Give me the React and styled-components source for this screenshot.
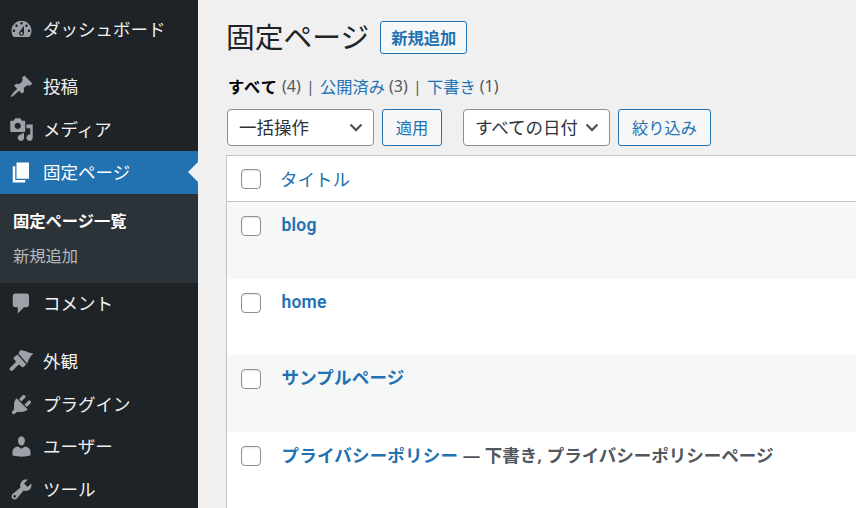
import React from 'react';
import styled, { createGlobalStyle } from 'styled-components';

const iconPaths = {
  dashboard: 'M3.76 16h12.48c1.1-1.37 1.76-3.11 1.76-5 0-4.42-3.58-8-8-8s-8 3.58-8 8c0 1.89.66 3.63 1.76 5zM10 4c.55 0 1 .45 1 1s-.45 1-1 1-1-.45-1-1 .45-1 1-1zM6 6c.55 0 1 .45 1 1s-.45 1-1 1-1-.45-1-1 .45-1 1-1zm8 0c.55 0 1 .45 1 1s-.45 1-1 1-1-.45-1-1 .45-1 1-1zm-5.37 5.55L12 7v6c0 1.1-.9 2-2 2s-2-.9-2-2c0-.57.24-1.08.63-1.45zM4 10c.55 0 1 .45 1 1s-.45 1-1 1-1-.45-1-1 .45-1 1-1zm12 0c.55 0 1 .45 1 1s-.45 1-1 1-1-.45-1-1 .45-1 1-1zm-5 3c0-.55-.45-1-1-1s-1 .45-1 1 .45 1 1 1 1-.45 1-1z',
  post: 'M10.44 3.02l1.82-1.82 6.36 6.35-1.83 1.82c-1.05-.68-2.48-.57-3.41.36l-.75.75c-.92.93-1.04 2.35-.35 3.41l-1.83 1.82-2.41-2.41-2.8 2.79c-.42.42-3.38 2.71-3.8 2.29s1.86-3.39 2.28-3.81l2.79-2.79L4.1 9.36l1.83-1.82c1.05.69 2.48.57 3.4-.36l.75-.75c.93-.92 1.05-2.35.36-3.41z',
  media: 'M13 11V4c0-.55-.45-1-1-1h-1.67L9 1H5L3.67 3H2c-.55 0-1 .45-1 1v7c0 .55.45 1 1 1h10c.55 0 1-.45 1-1zM7 4.5c1.38 0 2.5 1.12 2.5 2.5S8.38 9.5 7 9.5 4.5 8.38 4.5 7 5.62 4.5 7 4.5zM14 6h5v10.5c0 1.38-1.12 2.5-2.5 2.5S14 17.88 14 16.5s1.12-2.5 2.5-2.5c.17 0 .34.02.5.05V9h-3V6zm-4 8.05V13h2v3.5c0 1.38-1.12 2.5-2.5 2.5S7 17.88 7 16.5 8.12 14 9.5 14c.17 0 .34.02.5.05z',
  page: 'M6 15V2h10v13H6zm-1 1h8v2H3V5h2v11z',
  comments: 'M5 2h9c1.1 0 2 .9 2 2v7c0 1.1-.9 2-2 2h-2l-5 5v-5H5c-1.1 0-2-.9-2-2V4c0-1.1.9-2 2-2z',
  appearance: 'M7.5 3.6L9 1c3-.2 6 2 10.6 2.6-2.6 1.9-4.1 4.9-5 8.2zM6.8 4.4l7.1 8-2.1 1.8c-.6.5-1.3.5-1.8 0L8.8 13c-.5-.5-1.1-.5-1.6 0l-3.8 3.8c-.8.8-1.9.8-2.5.2s-.5-1.7.3-2.5L5 10.9c.5-.5.5-1.2 0-1.7l-1-1c-.5-.5-.5-1.1 0-1.6z',
  plugins: 'M13.11 4.36L9.87 7.6 8 5.73l3.24-3.24c.35-.34 1.05-.2 1.56.32.52.51.66 1.21.31 1.55zm-8 1.77l.91-1.12 9.01 9.01-1.19.84c-.71.71-2.63 1.16-3.82 1.16H6.14L4.9 17.26c-.59.59-1.54.59-2.12 0-.59-.58-.59-1.53 0-2.12l1.24-1.24v-3.88c0-1.13.4-3.19 1.09-3.89zm7.26 3.97l3.24-3.24c.34-.35 1.04-.21 1.55.31.52.51.66 1.21.31 1.55l-3.24 3.25z',
  users: 'M10 9.25c-2.27 0-2.73-3.44-2.73-3.44C7 4.02 7.82 2 9.97 2c2.16 0 2.98 2.02 2.71 3.81 0 0-.41 3.44-2.68 3.44zm0 2.57L12.72 10c2.39 0 4.52 2.33 4.52 4.53v2.49s-3.65 1.13-7.24 1.13c-3.65 0-7.24-1.13-7.24-1.13v-2.49c0-2.25 1.94-4.48 4.47-4.48z',
  tools: 'M16.68 9.77c-1.34 1.34-3.3 1.67-4.95.99l-5.41 6.52c-.99.99-2.59.99-3.58 0s-.99-2.59 0-3.57l6.52-5.42c-.68-1.65-.35-3.61.99-4.95 1.28-1.28 3.12-1.62 4.72-1.06l-2.89 2.89 2.82 2.82 2.86-2.87c.53 1.58.18 3.39-1.08 4.65zM3.81 16.21c.4.39 1.04.39 1.43 0 .4-.4.4-1.04 0-1.43-.39-.4-1.03-.4-1.43 0-.39.39-.39 1.03 0 1.43z',
};

const Icon = ({ name }) => (
  <IconSvg viewBox="0 0 20 20">
    <path d={iconPaths[name]} />
  </IconSvg>
);

const Chevron = () => (
  <ChevronSvg viewBox="0 0 14 9">
    <path d="M1.5 1.5L7 7l5.5-5.5" />
  </ChevronSvg>
);

const pages = [
  { title: 'blog' },
  { title: 'home' },
  { title: 'サンプルページ' },
  { title: 'プライバシーポリシー', state: ' — 下書き, プライバシーポリシーページ' },
];

export default function App() {
  return (
    <Layout>
      <GlobalStyle />
      <Sidebar>
        <MenuItem><Icon name="dashboard" /><MenuLabel>ダッシュボード</MenuLabel></MenuItem>
        <Separator />
        <MenuItem><Icon name="post" /><MenuLabel>投稿</MenuLabel></MenuItem>
        <MenuItem><Icon name="media" /><MenuLabel>メディア</MenuLabel></MenuItem>
        <MenuItem $active><Icon name="page" /><MenuLabel>固定ページ</MenuLabel><ActiveArrow /></MenuItem>
        <SubMenu>
          <SubItem $current>固定ページ一覧</SubItem>
          <SubItem>新規追加</SubItem>
        </SubMenu>
        <MenuItem><Icon name="comments" /><MenuLabel>コメント</MenuLabel></MenuItem>
        <Separator />
        <MenuItem><Icon name="appearance" /><MenuLabel>外観</MenuLabel></MenuItem>
        <MenuItem><Icon name="plugins" /><MenuLabel>プラグイン</MenuLabel></MenuItem>
        <MenuItem><Icon name="users" /><MenuLabel>ユーザー</MenuLabel></MenuItem>
        <MenuItem><Icon name="tools" /><MenuLabel>ツール</MenuLabel></MenuItem>
      </Sidebar>
      <Main>
        <Header>
          <Title>固定ページ</Title>
          <AddButton>新規追加</AddButton>
        </Header>
        <Filters>
          <strong>すべて</strong> <Count>(4)</Count>
          <Divider>|</Divider>
          <FilterLink>公開済み</FilterLink> <Count>(3)</Count>
          <Divider>|</Divider>
          <FilterLink>下書き</FilterLink> <Count>(1)</Count>
        </Filters>
        <Actions>
          <Select $width="147px">一括操作<Chevron /></Select>
          <ActionButton $width="60px">適用</ActionButton>
          <Select $width="147px" $gap="13px">すべての日付<Chevron /></Select>
          <ActionButton $width="93px">絞り込み</ActionButton>
        </Actions>
        <Table>
          <HeadRow>
            <Checkbox />
            <HeadTitle>タイトル</HeadTitle>
          </HeadRow>
          {pages.map((page, index) => (
            <Row key={page.title} $odd={index % 2 === 0}>
              <Checkbox />
              <RowTitle>
                <RowLink>{page.title}</RowLink>
                {page.state && <RowState>{page.state}</RowState>}
              </RowTitle>
            </Row>
          ))}
        </Table>
      </Main>
    </Layout>
  );
}

const GlobalStyle = createGlobalStyle`
  html, body {
    margin: 0;
    height: 100%;
    overflow: hidden;
  }
  body {
    background: #f0f0f1;
    color: #3c434a;
    font-family: "Noto Sans", "Noto Sans CJK JP", sans-serif;
  }
`;

const Layout = styled.div`
  display: flex;
  height: 100vh;
  overflow: hidden;
`;

const Sidebar = styled.nav`
  width: 198px;
  flex-shrink: 0;
  padding-top: 8px;
  background: #1d2327;
`;

const IconSvg = styled.svg`
  width: 25px;
  height: 25px;
  margin-right: 9px;
  flex-shrink: 0;
  fill: #9ca2a7;
`;

const MenuItem = styled.div`
  position: relative;
  display: flex;
  align-items: center;
  height: 42.67px;
  padding-left: 9px;
  font-size: 17.5px;
  color: ${({ $active }) => ($active ? '#fff' : '#f0f0f1')};
  background: ${({ $active }) => ($active ? '#2271b1' : 'transparent')};
  ${IconSvg} {
    fill: ${({ $active }) => ($active ? '#fff' : '#9ca2a7')};
  }
`;

const MenuLabel = styled.span`
  margin-bottom: 2px;
`;

const ActiveArrow = styled.span`
  position: absolute;
  right: 0;
  top: 50%;
  margin-top: -10px;
  border: 10px solid transparent;
  border-left-width: 0;
  border-right-color: #f0f0f1;
`;

const Separator = styled.div`
  height: 15px;
`;

const SubMenu = styled.div`
  padding: 9px 0 10px;
  background: #2c3338;
`;

const SubItem = styled.div`
  display: flex;
  align-items: center;
  height: 35px;
  padding-left: 13px;
  font-size: 16.25px;
  font-weight: ${({ $current }) => ($current ? 700 : 400)};
  color: ${({ $current }) => ($current ? '#fff' : '#b4b9be')};
`;

const Main = styled.main`
  flex: 1;
  min-width: 0;
  padding-left: 29px;
`;

const Header = styled.div`
  display: flex;
  align-items: center;
  height: 33px;
  margin-top: 21px;
`;

const Title = styled.h1`
  margin: 0 11px 0 -1px;
  padding-bottom: 2px;
  font-size: 28.75px;
  font-weight: 400;
  line-height: 33px;
  color: #1d2327;
`;

const buttonBase = `
  display: flex;
  align-items: center;
  justify-content: center;
  box-sizing: border-box;
  padding-bottom: 2px;
  border: 1px solid #2271b1;
  border-radius: 3px;
  background: #f6f7f7;
  color: #2271b1;
  font-size: 16.25px;
`;

const AddButton = styled.div`
  ${buttonBase}
  width: 87px;
  height: 33px;
  font-weight: 700;
`;

const Filters = styled.div`
  display: flex;
  align-items: center;
  gap: 4px;
  height: 24px;
  margin: 20px 0 11px 1px;
  font-size: 16.25px;
  strong {
    color: #000;
    font-weight: 700;
    letter-spacing: 1px;
  }
`;

const FilterLink = styled.span`
  color: #2271b1;
`;

const Count = styled.span`
  color: #50575e;
  font-size: 16px;
`;

const Divider = styled.span`
  margin: 0 1.5px;
  color: #50575e;
  font-size: 15px;
`;

const Actions = styled.div`
  display: flex;
  gap: 8px;
  height: 37px;
`;

const Select = styled.div`
  display: flex;
  align-items: center;
  justify-content: space-between;
  box-sizing: border-box;
  width: ${({ $width }) => $width};
  margin-left: ${({ $gap }) => $gap || 0};
  padding: 0 10px 2px 11px;
  border: 1px solid #8c8f94;
  border-radius: 4px;
  background: #fff;
  color: #2c3338;
  font-size: 17.5px;
`;

const ChevronSvg = styled.svg`
  width: 14px;
  height: 9px;
  margin-top: 2px;
  flex-shrink: 0;
  fill: none;
  stroke: #50575e;
  stroke-width: 2.3;
`;

const ActionButton = styled.div`
  ${buttonBase}
  width: ${({ $width }) => $width};
`;

const Table = styled.div`
  margin: 9px 0 0 -1px;
  border: 1px solid #c3c4c7;
  border-right: 0;
  background: #fff;
`;

const Checkbox = styled.span`
  box-sizing: border-box;
  width: 20px;
  height: 20px;
  flex-shrink: 0;
  border: 1px solid #8c8f94;
  border-radius: 4px;
  background: #fff;
  box-shadow: inset 0 1px 2px rgba(0, 0, 0, 0.1);
`;

const HeadRow = styled.div`
  display: flex;
  align-items: center;
  height: 45px;
  padding-left: 14px;
  border-bottom: 1px solid #c3c4c7;
`;

const HeadTitle = styled.span`
  margin-left: 19px;
  font-size: 17.5px;
  color: #2271b1;
`;

const Row = styled.div`
  display: flex;
  align-items: flex-start;
  box-sizing: border-box;
  height: 76.5px;
  padding: 14px 0 0 14px;
  background: ${({ $odd }) => ($odd ? '#f6f7f7' : '#fff')};
`;

const RowTitle = styled.div`
  margin: -1px 0 0 20.5px;
  font-family: Roboto, "Noto Sans CJK JP", sans-serif;
  font-size: 17.5px;
  font-weight: 600;
  line-height: 20px;
  white-space: nowrap;
`;

const RowLink = styled.span`
  color: #2271b1;
  letter-spacing: 0.2px;
`;

const RowState = styled.span`
  font-family: "Noto Sans", "Noto Sans CJK JP", sans-serif;
  color: #50575e;
`;
